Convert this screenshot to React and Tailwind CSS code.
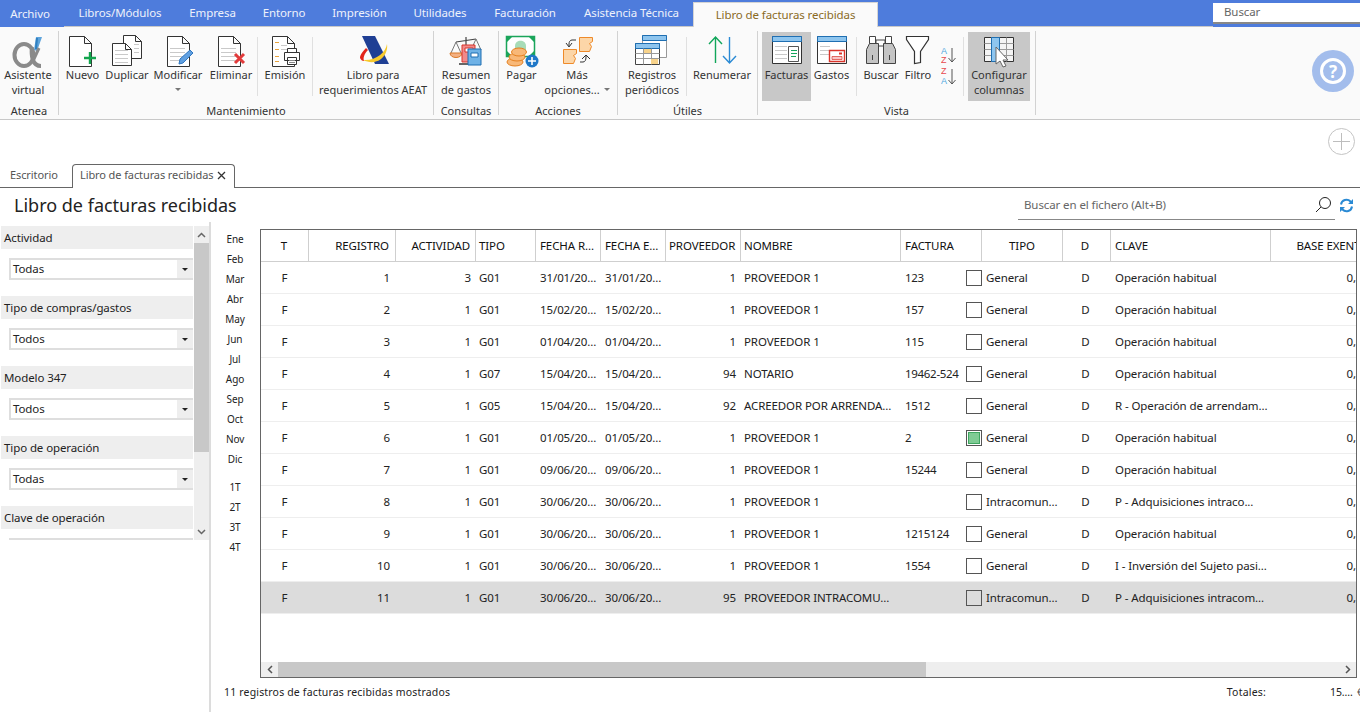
import React from 'react'

const tabs = [
  ['Archivo', 'w-[64px] pr-[4px]'],
  ['Libros/Módulos', 'w-[112px]'],
  ['Empresa', 'w-[73px]'],
  ['Entorno', 'w-[70px]'],
  ['Impresión', 'w-[81px]'],
  ['Utilidades', 'w-[80px]'],
  ['Facturación', 'w-[90px]'],
  ['Asistencia Técnica', 'w-[123px]'],
]

// Iconos del ribbon
const Sheet = ({ x = 0.5, y = 0.5, w = 22, h = 30, fold = 7 }) => (
  <path
    d={`M${x} ${y}H${x + w - fold}L${x + w} ${y + fold}V${y + h}H${x}ZM${x + w - fold} ${y}V${y + fold}H${x + w}`}
    fill="#fff"
    stroke="#333"
  />
)

const Lines = ({ x, y, w, n = 4, color = '#c9c9c9', gap = 4 }) => (
  <>
    {Array.from({ length: n }).map((_, i) => (
      <path key={i} d={`M${x} ${y + i * gap + 0.5}h${w}`} stroke={color} />
    ))}
  </>
)

const IconAlpha = () => (
  <svg width="44" height="36" viewBox="0 0 44 36">
    <path d="M30 2l6 0-5 14-3-1z" fill="#5ea4dc" />
    <path d="M31 3l-1 11" stroke="#2f7fc0" strokeWidth="2" fill="none" />
    <ellipse cx="18" cy="20" rx="9.5" ry="11" fill="none" stroke="#8a8a8a" strokeWidth="4" />
    <path d="M26 12c-1 8 0 19 9 19" fill="none" stroke="#8a8a8a" strokeWidth="4" />
    <path d="M27 26l6-13" stroke="#8a8a8a" strokeWidth="3" fill="none" />
  </svg>
)

const IconNuevo = () => (
  <svg width="30" height="32" viewBox="0 0 30 32">
    <Sheet x={1.5} y={1.5} />
    <path d="M16 23h12M22 17v12" stroke="#12a54d" strokeWidth="2.4" />
  </svg>
)

const IconDuplicar = () => (
  <svg width="32" height="32" viewBox="0 0 32 32">
    <Sheet x={12.5} y={0.5} w={18} h={23} fold={6} />
    <Lines x={23} y={9} w={5} n={3} />
    <Sheet x={1.5} y={8.5} w={19} h={22} fold={6} />
    <Lines x={4} y={15} w={13} n={4} />
  </svg>
)

const IconModificar = () => (
  <svg width="32" height="32" viewBox="0 0 32 32">
    <Sheet x={5.5} y={1.5} />
    <Lines x={8} y={13} w={15} n={4} />
    <path d="M17 29l1-5L28 15l3 3-10 10z" fill="#5f9fe0" stroke="#2f76c0" />
  </svg>
)

const IconEliminar = () => (
  <svg width="32" height="32" viewBox="0 0 32 32">
    <Sheet x={3.5} y={1.5} />
    <Lines x={6} y={13} w={15} n={4} />
    <path d="M20 19l9 9M29 19l-9 9" stroke="#e23b3b" strokeWidth="3" />
  </svg>
)

const IconEmision = () => (
  <svg width="32" height="32" viewBox="0 0 32 32">
    <Sheet x={3.5} y={1.5} />
    <Lines x={6} y={7} w={4} n={2} color="#e8a33c" gap={7} />
    <Lines x={6} y={21} w={4} n={2} color="#e8a33c" gap={5} />
    <Lines x={12} y={10} w={6} n={2} />
    <path d="M18.500 17.500v-4h9v4M15.500 17.500h15v8h-15zM18.500 22.500h9v7h-9z" fill="#fff" stroke="#333" />
    <path d="M20 25.500h6M20 27.500h6" stroke="#888" />
  </svg>
)

const IconAeat = () => (
  <svg width="36" height="32" viewBox="0 0 36 32">
    <path d="M7 1h13l14 28H20z" fill="#1f3f94" />
    <path d="M32 9c-1 8-11 17-24 16 6 3 13 3 18-1 4-3 7-9 6-15z" fill="#f7c92c" />
    <path d="M11 13c-3 3-6 7-6 10 1 2 2 3 4 3-1-3 0-7 4-11z" fill="#e2231a" />
  </svg>
)

const IconResumen = () => (
  <svg width="36" height="32" viewBox="0 0 36 32">
    <path d="M18 2v24M8 7l20-3" stroke="#444" strokeWidth="1.2" />
    <path d="M8 7L3 18M8 7l5 11M28 4l-5 11M28 4l5 11" stroke="#777" />
    <path d="M2 18h12c0 6-12 6-12 0z" fill="#f4b183" stroke="#d97a2a" />
    <path d="M11 28h14v2H11z" fill="#666" />
    <path d="M14 10h13v17H14z" fill="#f08a8a" stroke="#d9342b" />
    <path d="M17 13h8v4h-8z" fill="#fff" stroke="#d9342b" />
    <path d="M20 17h13v16H20z" fill="#6fb2e6" stroke="#1f6fb2" transform="translate(0 -3)" />
    <path d="M23 18h7v4h-7z" fill="#fff" stroke="#1f6fb2" />
  </svg>
)

const IconPagar = () => (
  <svg width="34" height="34" viewBox="0 0 34 34">
    <path d="M1.500 1.500h28v20h-28z" fill="#fff" stroke="#1aa55a" strokeWidth="1.5" />
    <path d="M1.500 1.500h6l-6 6zM29.500 1.500h-6l6 6zM1.500 21.500v-6l6 6zM29.500 21.500v-6l-6 6z" fill="#1aa55a" />
    <path d="M10 18v-7c0-7 11-7 11 0v7z" fill="#a8dcb8" />
    <ellipse cx="10" cy="27" rx="8" ry="4" fill="#f8b878" stroke="#e5801f" />
    <ellipse cx="12" cy="22" rx="8" ry="4" fill="#f8b878" stroke="#e5801f" />
    <ellipse cx="14" cy="17" rx="7.500" ry="4" fill="#f8b878" stroke="#e5801f" />
    <circle cx="27" cy="26" r="6.500" fill="#1f78c8" />
    <path d="M23 26h8M27 22v8" stroke="#fff" strokeWidth="1.6" />
  </svg>
)

const IconOpciones = () => (
  <svg width="34" height="32" viewBox="0 0 34 32">
    <path d="M19.500 2.500h13v4l-3 2 2 3-2 5h-10z" fill="#fcd6a8" stroke="#ee8a2a" />
    <path d="M3.500 14.500h13v4l-3 2 2 3-2 5h-10z" fill="#fcd6a8" stroke="#ee8a2a" />
    <path d="M16 5h-4c-2 0-3 2-3 4v2M6 8l3 4 3-4" fill="none" stroke="#333" />
    <path d="M20 27h3c2 0 3-2 3-5v-1M22 24l4-4 4 4" fill="none" stroke="#333" />
  </svg>
)

const IconRegistros = () => (
  <svg width="34" height="32" viewBox="0 0 34 32">
    <path d="M7.500 0.500h24v22h-24z" fill="#fff" stroke="#999" />
    <path d="M7.500 0.500h24v5h-24z" fill="#8ec5ee" stroke="#1f6fb2" />
    <path d="M0.500 8.500h24v21h-24z" fill="#fff" stroke="#444" />
    <path d="M0.500 8.500h24v5h-24z" fill="#8ec5ee" stroke="#1f6fb2" />
    <path d="M0.500 18.500h24M0.500 23.500h24M8.500 13.500v16M16.500 13.500v16" stroke="#999" />
    <path d="M9 14h7v4H9zM16 24h7v5h-7z" fill="#f8d38a" />
  </svg>
)

const IconRenumerar = () => (
  <svg width="32" height="30" viewBox="0 0 32 30">
    <path d="M9.500 28V2M3 9l6.500-7L16 9" fill="none" stroke="#10a65a" strokeWidth="1.4" />
    <path d="M23.500 2v26M17 21l6.500 7 6.500-7" fill="none" stroke="#2a8ad4" strokeWidth="1.4" />
  </svg>
)

const IconFacturas = () => (
  <svg width="32" height="30" viewBox="0 0 32 30">
    <path d="M1.500 1.500h29v27h-29z" fill="#fff" stroke="#333" />
    <path d="M1.500 1.500h29v5h-29z" fill="#8ec5ee" stroke="#1f6fb2" />
    <Lines x={4} y={11} w={12} n={4} />
    <path d="M17.500 11.500h10v15h-10z" fill="#fff" stroke="#555" />
    <path d="M20 15.500h6M20 18.500h6M20 21.500h5" stroke="#16a55c" />
  </svg>
)

const IconGastos = () => (
  <svg width="32" height="30" viewBox="0 0 32 30">
    <path d="M1.500 1.500h29v27h-29z" fill="#fff" stroke="#333" />
    <path d="M1.500 1.500h29v5h-29z" fill="#8ec5ee" stroke="#1f6fb2" />
    <Lines x={4} y={11} w={10} n={3} />
    <path d="M13.500 15.500h15v11h-15z" fill="#fff" stroke="#d9342b" strokeWidth="1.400" />
    <path d="M16 21.500h10v3H16z" fill="#f6c6c6" stroke="#d9342b" strokeWidth="0.700" />
    <path d="M23 17.500h3v2h-3z" fill="#d9342b" />
  </svg>
)

const IconBuscar = () => (
  <svg width="34" height="30" viewBox="0 0 34 30">
    <path d="M5.500 1.500h6v7h-6zM21.500 1.500h6v7h-6zM12 5h9v6h-9z" fill="#fff" stroke="#444" />
    <path d="M2.500 14.500l3-6h9v20h-12zM19.500 8.500h9l3 6v14h-12z" fill="#c4c4c4" stroke="#444" />
    <path d="M8.500 20v5M25.500 20v5" stroke="#444" />
  </svg>
)

const IconFiltro = () => (
  <svg width="26" height="30" viewBox="0 0 26 30">
    <path d="M1.500 1.500h22v3l-8 12v11l-6 1v-12l-8-12z" fill="#fff" stroke="#333" strokeWidth="1.200" />
  </svg>
)

const IconSort = () => (
  <svg width="18" height="42" viewBox="0 0 18 42" className="mt-[14px] ml-[8px]">
    <text x="0" y="8" fontSize="9" fill="#4fa6e0" fontFamily="Liberation Sans, sans-serif">A</text>
    <text x="0" y="17" fontSize="9" fill="#e8484d" fontFamily="Liberation Sans, sans-serif">Z</text>
    <text x="0" y="28" fontSize="9" fill="#e8484d" fontFamily="Liberation Sans, sans-serif">Z</text>
    <text x="0" y="38" fontSize="9" fill="#4fa6e0" fontFamily="Liberation Sans, sans-serif">A</text>
    <path d="M11 2v14M7.500 12l3.500 4 3.500-4M11 23v15M7.500 34l3.500 4 3.500-4" fill="none" stroke="#555" />
  </svg>
)

const IconColumnas = () => (
  <svg width="36" height="34" viewBox="0 0 36 34">
    <path d="M3.500 2.500h29v24h-29z" fill="#f4f4f4" stroke="#333" />
    <path d="M3.500 8.500h29M3.500 14.500h29M3.500 20.500h29M10.500 2.500v24M25.500 2.500v24" stroke="#9a9a9a" />
    <path d="M10.500 2.500h8v24h-8z" fill="#8ec5ee" stroke="#1f6fb2" />
    <path d="M15 12v17l4-3 3 6 3-1-3-6h5z" fill="#fff" stroke="#666" />
  </svg>
)

const RibbonButton = ({ icon, lines, className = '', active, caret }) => (
  <div className={`h-[69px] flex flex-col items-center shrink-0 ${active ? 'bg-[#c8c8c8]' : ''} ${className}`}>
    <div className="h-[35px] pt-[3px] flex items-start justify-center">{icon}</div>
    <div className="text-center leading-[15px] whitespace-nowrap">
      {lines.map((l, i) => (
        <div key={i}>{l}</div>
      ))}
      {caret && (
        <div className="flex justify-center pt-[6px]">
          <div className="w-0 h-0 border-x-[3px] border-x-transparent border-t-[3px] border-t-[#777]"></div>
        </div>
      )}
    </div>
  </div>
)

const Sep = ({ className = '' }) => <div className={`w-px h-[59px] mt-[5px] bg-[#e0e0e0] shrink-0 ${className}`}></div>

const Group = ({ label, width, children }) => (
  <div className={`${width} h-[84px] mt-[4px] pt-px border-r border-[#d2d2d2] flex flex-col shrink-0`}>
    <div className="flex h-[69px]">{children}</div>
    <div className="text-center leading-[16px] mt-[2px]">{label}</div>
  </div>
)

const Ribbon = () => (
  <div className="relative h-[93px] bg-[#fafafa] border-b border-[#c8c8c8] flex text-[#333] text-[11px] tracking-normal">
    <Group label="Atenea" width="w-[59px]">
      <RibbonButton className="w-[56px]" icon={<IconAlpha />} lines={['Asistente', 'virtual']} />
    </Group>
    <Group label="Mantenimiento" width="w-[375px]">
      <RibbonButton className="w-[45px] ml-px" icon={<IconNuevo />} lines={['Nuevo']} />
      <RibbonButton className="w-[44px]" icon={<IconDuplicar />} lines={['Duplicar']} />
      <RibbonButton className="w-[58px]" icon={<IconModificar />} lines={['Modificar']} caret />
      <RibbonButton className="w-[48px] mr-[2px]" icon={<IconEliminar />} lines={['Eliminar']} />
      <Sep />
      <RibbonButton className="w-[54px]" icon={<IconEmision />} lines={['Emisión']} />
      <Sep />
      <RibbonButton className="w-[120px]" icon={<IconAeat />} lines={['Libro para', 'requerimientos AEAT']} />
    </Group>
    <Group label="Consultas" width="w-[65px]">
      <RibbonButton className="w-[64px]" icon={<IconResumen />} lines={['Resumen', 'de gastos']} />
    </Group>
    <Group label="Acciones" width="w-[119px]">
      <RibbonButton className="w-[45px]" icon={<IconPagar />} lines={['Pagar']} />
      <RibbonButton
        className="w-[66px]"
        icon={<IconOpciones />}
        lines={[
          'Más',
          <span key="o" className="inline-flex items-center gap-[4px]">
            opciones...
            <span className="w-0 h-0 border-x-[3px] border-x-transparent border-t-[3px] border-t-[#777]"></span>
          </span>,
        ]}
      />
    </Group>
    <Group label="Útiles" width="w-[140px]">
      <RibbonButton className="w-[68px]" icon={<IconRegistros />} lines={['Registros', 'periódicos']} />
      <Sep />
      <RibbonButton className="w-[70px]" icon={<IconRenumerar />} lines={['Renumerar']} />
    </Group>
    <Group label="Vista" width="w-[278px]">
      <RibbonButton className="w-[49px] ml-[4px]" active icon={<IconFacturas />} lines={['Facturas']} />
      <RibbonButton className="w-[41px]" icon={<IconGastos />} lines={['Gastos']} />
      <Sep className="ml-[4px]" />
      <RibbonButton className="w-[48px]" icon={<IconBuscar />} lines={['Buscar']} />
      <RibbonButton className="w-[26px]" icon={<IconFiltro />} lines={['Filtro']} />
      <div className="w-[29px] flex justify-center">
        <IconSort />
      </div>
      <Sep className="ml-[3px]" />
      <RibbonButton className="w-[62px] ml-[4px]" active icon={<IconColumnas />} lines={['Configurar', 'columnas']} />
    </Group>
    {/* Botón de ayuda flotante */}
    <div className="absolute left-[1312px] top-[23px] w-[42px] h-[42px] rounded-full bg-[#a3bdec] flex items-center justify-center">
      <div className="w-[26px] h-[26px] rounded-full border-[3px] border-white flex items-center justify-center text-white text-[17px] font-bold leading-none">?</div>
    </div>
  </div>
)

const filters = [
  ['Actividad', 'Todas'],
  ['Tipo de compras/gastos', 'Todos'],
  ['Modelo 347', 'Todos'],
  ['Tipo de operación', 'Todas'],
  ['Clave de operación', ''],
]

const Sidebar = () => (
  <div className="w-[211px] shrink-0 border-r-2 border-[#dcdcdc] pt-[4px]">
    <div className="flex h-[314px] overflow-hidden">
      <div className="w-[192px] ml-px shrink-0">
        {filters.map(([label, value]) => (
          <div key={label} className="h-[70px]">
            <div className="h-[23px] bg-[#eeeeee] pl-[3px] leading-[24px] text-[#222]">{label}</div>
            <div className="ml-[8px] mt-[9px] h-[22px] border-2 border-r-0 border-[#dedede] flex items-center justify-between">
              <span className="pl-[2px] text-[#222]">{value}</span>
              <span className="w-[16px] h-[18px] bg-[#eeeeee] flex items-center justify-center">
                <span className="w-0 h-0 border-x-[3px] border-x-transparent border-t-[3px] border-t-[#222]"></span>
              </span>
            </div>
          </div>
        ))}
      </div>
      <div className="w-[15px] ml-px bg-[#eeeeee] flex flex-col items-center">
        <div className="h-[17px] flex items-center justify-center">
          <svg width="9" height="6" viewBox="0 0 9 6"><path d="M1 5l3.500-3.500L8 5" fill="none" stroke="#666" strokeWidth="1.500" /></svg>
        </div>
        <div className="w-full h-[209px] bg-[#c8c8c8]"></div>
        <div className="flex-1"></div>
        <div className="h-[17px] flex items-center justify-center">
          <svg width="9" height="6" viewBox="0 0 9 6"><path d="M1 1l3.500 3.500L8 1" fill="none" stroke="#666" strokeWidth="1.500" /></svg>
        </div>
      </div>
    </div>
  </div>
)

const months = ['Ene', 'Feb', 'Mar', 'Abr', 'May', 'Jun', 'Jul', 'Ago', 'Sep', 'Oct', 'Nov', 'Dic']
const quarters = ['1T', '2T', '3T', '4T']

const Months = () => (
  <div className="w-[49px] shrink-0 pt-[7px] pr-px text-[10px] text-[#222] text-center">
    {months.map((m) => (
      <div key={m} className="h-[20px] leading-[20px]">{m}</div>
    ))}
    <div className="h-[8px]"></div>
    {quarters.map((q) => (
      <div key={q} className="h-[20px] leading-[20px]">{q}</div>
    ))}
  </div>
)

const cols = 'grid grid-cols-[48px_87px_80px_60px_65px_65px_75px_160px_81px_81px_48px_160px_105px]'

const headers = [
  ['T', 'justify-center pr-px'],
  ['REGISTRO', 'justify-end pr-[6px]'],
  ['ACTIVIDAD', 'justify-end pr-[5px]'],
  ['TIPO', 'pl-[3px]'],
  ['FECHA R...', 'pl-[4px]'],
  ['FECHA E...', 'pl-[4px]'],
  ['PROVEEDOR', 'pl-[3px]'],
  ['NOMBRE', 'pl-[3px]'],
  ['FACTURA', 'pl-[4px]'],
  ['TIPO', 'justify-center'],
  ['D', 'justify-center pr-[3px]'],
  ['CLAVE', 'pl-[4px]'],
  ['BASE EXENTA', 'justify-end pr-[8px]'],
]

const HAB = 'Operación habitual'
const rows = [
  [1, 3, 'G01', '31/01/20...', '31/01/20...', 1, 'PROVEEDOR 1', '123', 'General', HAB],
  [2, 1, 'G01', '15/02/20...', '15/02/20...', 1, 'PROVEEDOR 1', '157', 'General', HAB],
  [3, 1, 'G01', '01/04/20...', '01/04/20...', 1, 'PROVEEDOR 1', '115', 'General', HAB],
  [4, 1, 'G07', '15/04/20...', '15/04/20...', 94, 'NOTARIO', '19462-524', 'General', HAB],
  [5, 1, 'G05', '15/04/20...', '15/04/20...', 92, 'ACREEDOR POR ARRENDA...', '1512', 'General', 'R - Operación de arrendam...'],
  [6, 1, 'G01', '01/05/20...', '01/05/20...', 1, 'PROVEEDOR 1', '2', 'General', HAB],
  [7, 1, 'G01', '09/06/20...', '09/06/20...', 1, 'PROVEEDOR 1', '15244', 'General', HAB],
  [8, 1, 'G01', '30/06/20...', '30/06/20...', 1, 'PROVEEDOR 1', '', 'Intracomun...', 'P - Adquisiciones intraco...'],
  [9, 1, 'G01', '30/06/20...', '30/06/20...', 1, 'PROVEEDOR 1', '1215124', 'General', HAB],
  [10, 1, 'G01', '30/06/20...', '30/06/20...', 1, 'PROVEEDOR 1', '1554', 'General', 'I - Inversión del Sujeto pasi...'],
  [11, 1, 'G01', '30/06/20...', '30/06/20...', 95, 'PROVEEDOR INTRACOMU...', '', 'Intracomun...', 'P - Adquisiciones intracom...'],
]

const Row = ({ row }) => {
  const [reg, act, tipo, fr, fe, prov, nombre, factura, tipoIva, clave] = row
  const selected = reg === 11
  return (
    <div className={`${cols} h-[32px] border-b items-center whitespace-nowrap text-[#222] ${selected ? 'bg-[#dcdcdc] border-[#eeeeee]' : 'border-[#eeeeee]'}`}>
      <div className="text-center pr-px">F</div>
      <div className="text-right pr-[6px]">{reg}</div>
      <div className="text-right pr-[5px]">{act}</div>
      <div className="pl-[3px]">{tipo}</div>
      <div className="pl-[4px]">{fr}</div>
      <div className="pl-[4px]">{fe}</div>
      <div className="text-right pr-[5px]">{prov}</div>
      <div className="pl-[3px] overflow-hidden">{nombre}</div>
      <div className="pl-[4px] flex items-center justify-between tracking-[-0.3px]">
        <span>{factura}</span>
        <span className={`w-[16px] h-[16px] border border-[#555] shrink-0 flex items-center justify-center ${selected ? '' : 'bg-white'}`}>
          {reg === 6 && <span className="w-[12px] h-[12px] bg-[#7fcb94] border border-[#3fa560]"></span>}
        </span>
      </div>
      <div className="pl-[4px]">{tipoIva}</div>
      <div className="text-center pr-[3px]">D</div>
      <div className="pl-[4px]">{clave}</div>
      <div className="text-right pr-[7px]">0,00</div>
    </div>
  )
}

const Table = () => (
  <div className="w-[1097px] h-[449px] mt-[7px] border border-[#666] flex flex-col overflow-hidden bg-white">
    <div className={`${cols} h-[32px] border-b border-[#cfcfcf] whitespace-nowrap text-[#111] shrink-0`}>
      {headers.map(([h, cls], i) => (
        <div key={i} className={`flex items-center border-r border-[#cfcfcf] overflow-hidden ${cls}`}>{h}</div>
      ))}
    </div>
    <div className="flex-1 overflow-hidden">
      {rows.map((r) => (
        <Row key={r[0]} row={r} />
      ))}
    </div>
    <div className="h-[15px] bg-[#eeeeee] flex items-center shrink-0">
      <div className="w-[17px] flex justify-center">
        <svg width="6" height="9" viewBox="0 0 6 9"><path d="M5 1L1.500 4.500 5 8" fill="none" stroke="#555" strokeWidth="1.500" /></svg>
      </div>
      <div className="w-[648px] h-full bg-[#c8c8c8]"></div>
      <div className="flex-1"></div>
      <div className="w-[17px] flex justify-center">
        <svg width="6" height="9" viewBox="0 0 6 9"><path d="M1 1l3.500 3.500L1 8" fill="none" stroke="#555" strokeWidth="1.500" /></svg>
      </div>
    </div>
  </div>
)

export default function App() {
  return (
    <div className="w-[1360px] h-[712px] overflow-hidden bg-white flex flex-col text-[11.5px] font-['Noto_Sans',sans-serif] tracking-[-0.1px]">
      {/* Barra de menús */}
      <div className="h-[27px] bg-[#4e7cdc] flex text-[#eef2fb] shrink-0">
        {tabs.map(([t, w]) => (
          <div key={t} className={`${w} h-[27px] flex items-center justify-center whitespace-nowrap shrink-0 ${t === 'Archivo' ? '' : 'border-b border-[#c8c8c8]'}`}>{t}</div>
        ))}
        <div className="w-[185px] mt-[2px] bg-[#fafafa] border-t border-x border-[#d4d4d4] flex items-center justify-center text-[#8a6a1f]">Libro de facturas recibidas</div>
        <div className="flex-1 border-b border-[#c8c8c8]"></div>
        <div className="w-[147px] mt-[3px] h-[21px] mb-[3px] bg-white border-b-2 border-[#888] pl-[11px] leading-[18px] text-[#666]">Buscar</div>
      </div>

      <Ribbon />

      <div className="h-[40px] flex items-center justify-end pr-[5px] pt-[2px] shrink-0">
        <div className="w-[27px] h-[27px] rounded-full border border-[#c4c4c4] flex items-center justify-center">
          <svg width="17" height="17" viewBox="0 0 17 17"><path d="M8.500 0v17M0 8.500h17" stroke="#bdbdbd" /></svg>
        </div>
      </div>

      {/* Pestañas de documentos */}
      <div className="h-[28px] border-b border-[#666] flex items-end shrink-0 text-[#555]">
        <div className="w-[72px] pl-[10px] h-[24px] leading-[23px] text-[11px]">Escritorio</div>
        <div className="w-[163px] h-[24px] -mb-px bg-white border border-b-0 border-[#666] rounded-t-[4px] flex items-center pl-[7px] pb-[3px] gap-[4px] whitespace-nowrap text-[11px]">
          Libro de facturas recibidas
          <svg width="9" height="9" viewBox="0 0 9 9"><path d="M1 1l7 7M8 1L1 8" stroke="#333" strokeWidth="1.300" /></svg>
        </div>
      </div>

      {/* Título y buscador */}
      <div className="h-[34px] flex items-center shrink-0">
        <div className="pl-[14px] text-[18px] tracking-normal text-[#222]">Libro de facturas recibidas</div>
        <div className="ml-auto w-[317px] h-[32px] border-b border-[#888] pl-[6px] pt-[2px] flex items-center justify-between text-[#666] mt-[-2px]">
          <span>Buscar en el fichero (Alt+B)</span>
          <svg width="18" height="18" viewBox="0 0 18 18" className="mr-[3px]"><circle cx="11" cy="7" r="5.500" fill="none" stroke="#222" /><path d="M7 11l-5 5" stroke="#222" /></svg>
        </div>
        <div className="w-[25px] flex justify-center pr-[2px]">
          <svg width="15" height="15" viewBox="0 0 15 15">
            <path d="M2 6.500a5.500 5.500 0 0 1 9.500-3L13 5M13 8.500a5.500 5.500 0 0 1-9.500 3L2 10" fill="none" stroke="#2a8ad4" strokeWidth="2" />
            <path d="M14 1v5H9zM1 14V9h5z" fill="#2a8ad4" />
          </svg>
        </div>
      </div>

      {/* Contenido */}
      <div className="flex-1 flex min-h-0">
        <Sidebar />
        <Months />
        <div className="flex flex-col">
          <Table />
          <div className="flex items-center h-[30px] text-[#222] w-[1097px] text-[10.5px] whitespace-nowrap">
            <span className="-ml-[36px] tracking-[0.17px]">11 registros de facturas recibidas mostrados</span>
            <span className="ml-auto tracking-[0.2px]">Totales:</span>
            <span className="ml-[64px] w-[27px]">15....</span>
            <span className="mr-[-7px] w-[7px] text-[#555]">€</span>
          </div>
        </div>
      </div>
    </div>
  )
}
